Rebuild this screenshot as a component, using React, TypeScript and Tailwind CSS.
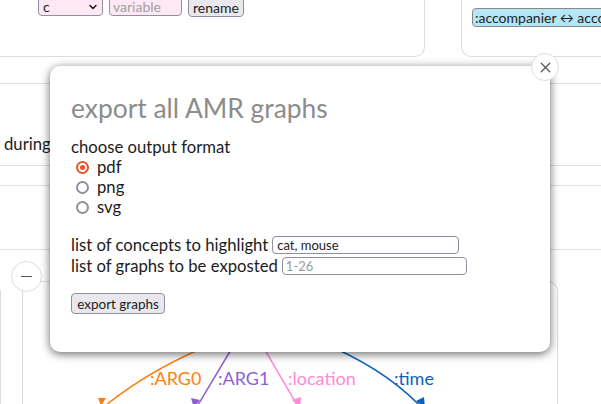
import { X, ChevronDown } from "lucide-react";

const ui = "font-['Lato','Noto_Sans',sans-serif]";
const label = "font-['Lato','DejaVu_Sans',sans-serif]";

function Radio({ checked, text }: { checked?: boolean; text: string }) {
  return (
    <label className="flex h-[20px] items-center gap-[8px] pl-[5px]">
      {checked ? (
        <span className="flex h-[13px] w-[13px] items-center justify-center rounded-full border-2 border-[#e5532a]">
          <span className="h-[5px] w-[5px] rounded-full bg-[#e5532a]" />
        </span>
      ) : (
        <span className="h-[13px] w-[13px] rounded-full border-2 border-[#8f8f9d]" />
      )}
      <span>{text}</span>
    </label>
  );
}

function Edges() {
  return (
    <svg className="absolute left-0 top-0" width="601" height="404" viewBox="0 0 601 404">
      <path d="M222 340 Q150 368 100 410" fill="none" stroke="#ff7f0e" strokeWidth="1.5" />
      <path d="M98 398 L106 398 L101 406 z" fill="#ff7f0e" />
      <path d="M238 338 L195 410" fill="none" stroke="#8e5fd3" strokeWidth="1.5" />
      <path d="M191 398 L200 400 L194 408 z" fill="#8e5fd3" />
      <path d="M258 338 L300 410" fill="none" stroke="#ff8bd6" strokeWidth="1.5" />
      <path d="M292 400 L301 397 L300 408 z" fill="#ff8bd6" />
      <path d="M320 342 Q385 368 424 410" fill="none" stroke="#0d5fc0" strokeWidth="1.5" />
      <path d="M416 401 L424 397 L425 408 z" fill="#0d5fc0" />
      <text x="150" y="385" fill="#ff7f0e" fontSize="18" className={label}>:ARG0</text>
      <text x="218" y="385" fill="#8e5fd3" fontSize="18" className={label}>:ARG1</text>
      <text x="288" y="385" fill="#ff8bd6" fontSize="18" className={label}>:location</text>
      <text x="394" y="385" fill="#0d5fc0" fontSize="18" className={label}>:time</text>
    </svg>
  );
}

export default function App() {
  return (
    <div className={`relative h-[404px] w-[601px] overflow-hidden bg-white text-[#1c1c1c] ${ui}`}>
      {/* page underneath */}
      <div className="flex h-[57px] justify-between">
        <div className="-ml-[10px] flex w-[435px] items-start gap-[6px] rounded-br-[10px] border-b border-r border-[#ddd] pl-[48px]">
          <div className="-mt-[3px] flex h-[19px] w-[65px] items-center justify-between rounded-[4px] border border-[#8f8f9d] bg-[#fde8f4] pl-[4px] pr-[3px] text-[14px]">
            <span>c</span>
            <ChevronDown size={12} strokeWidth={3} />
          </div>
          <div className="-mt-[3px] flex h-[19px] w-[73px] items-center rounded-[4px] border border-[#8f8f9d] bg-[#fde8f4] pl-[3px] text-[14px] text-[#a0a0a0]">
            variable
          </div>
          <div className="-mt-[3px] flex h-[20px] w-[56px] items-center justify-center rounded-[4px] border border-[#8f8f9d] bg-[#e9e9ed] text-[14px]">
            rename
          </div>
        </div>
        <div className="-mr-[40px] w-[180px] rounded-bl-[10px] border-b border-l border-[#ddd] pl-[10px] pt-[8px]">
          <div className={`flex h-[19px] items-center whitespace-nowrap rounded-[4px] border border-[#888] bg-[#b5e6f7] pl-[2px] text-[14px] ${label}`}>
            :accompanier ↔ accompanier
          </div>
        </div>
      </div>
      <div className="h-[27px] border-b border-[#ddd]" />
      <div className="flex h-[82px] items-end border-b border-[#ddd] pb-[8px] pl-[4px] text-[16.7px]">during</div>
      <div className="h-[20px] border-b border-[#ddd]" />
      <div className="h-[64px] border-b border-[#ddd]" />
      <div className="relative h-[154px] pt-[31px]">
        <div className="absolute left-0 top-[40px] h-[200px] border-l border-[#ddd]" />
        <div className="ml-[22px] mr-[43px] h-[200px] rounded-t-[10px] border-l border-r border-t border-[#ddd]" />
        <div className="absolute left-[11px] top-[11px] flex h-[31px] w-[31px] items-center justify-center rounded-full border border-[#ddd] bg-white">
          <span className="h-[1.5px] w-[11px] bg-[#555]" />
        </div>
      </div>
      <Edges />

      {/* modal */}
      <div className="absolute left-[50px] top-[66px] h-[286px] w-[500px] rounded-[10px] bg-white px-[21px] pt-[22px] shadow-[0_2px_10px_rgba(0,0,0,0.6)]">
        <h2 className="text-[26.4px] leading-[40px] text-[#8c8c8c]">export all AMR graphs</h2>
        <div className="mt-[9px] text-[16.7px] leading-[20px]">
          <div>choose output format</div>
          <Radio checked text="pdf" />
          <Radio text="png" />
          <Radio text="svg" />
          <div className="mt-[18px] flex h-[20px] items-center gap-[4px]">
            <span>list of concepts to highlight</span>
            <span className="flex h-[18px] w-[187px] items-center rounded-[4px] border border-[#8f8f9d] pl-[4px] text-[13px]">cat, mouse</span>
          </div>
          <div className="mt-[1px] flex h-[20px] items-center gap-[4px]">
            <span>list of graphs to be exposted</span>
            <span className="flex h-[18px] w-[185px] items-center rounded-[4px] border border-[#8f8f9d] pl-[3px] text-[13px] text-[#9a9a9a]">1-26</span>
          </div>
          <button className="mt-[17px] flex h-[21px] w-[94px] items-center justify-center rounded-[4px] border border-[#8f8f9d] bg-[#e9e9ed] text-[13.5px]">
            export graphs
          </button>
        </div>
      </div>
      <div className="absolute left-[531px] top-[53px] flex h-[28px] w-[28px] items-center justify-center rounded-full border border-[#ddd] bg-white text-[#555]">
        <X size={17} strokeWidth={1.75} />
      </div>
    </div>
  );
}
